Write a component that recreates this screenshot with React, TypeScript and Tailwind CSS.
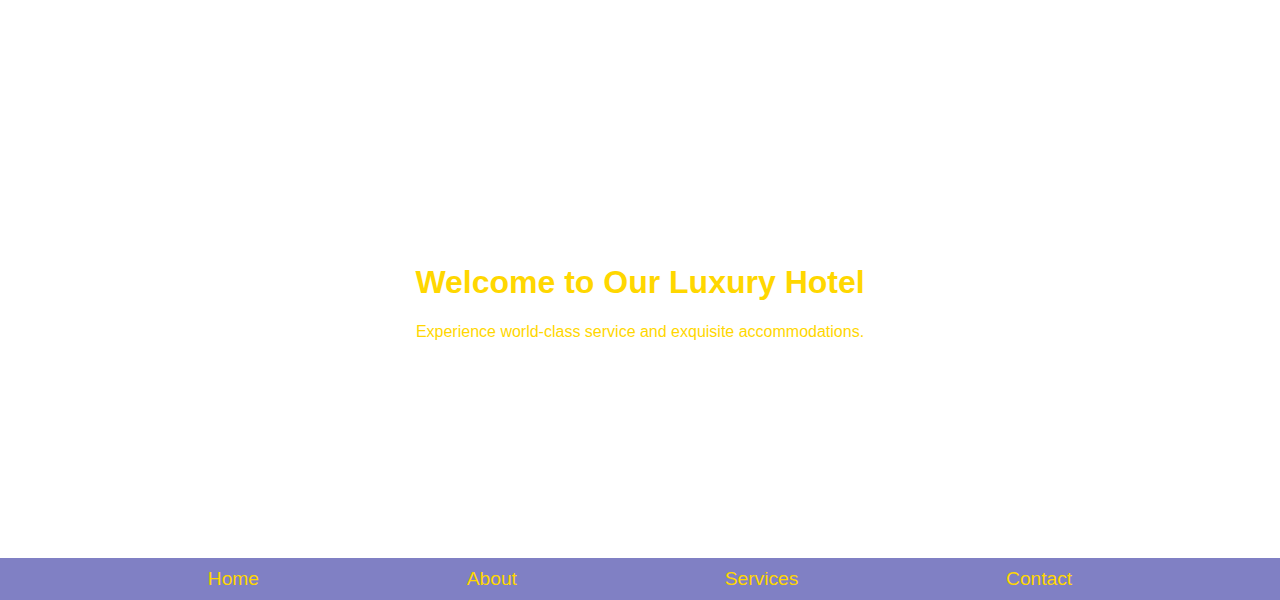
const links = ["Home", "About", "Services", "Contact"];

export default function App() {
    return (
        <div className="min-h-screen bg-white font-['Liberation_Sans',Arial,sans-serif]">
            <section className="flex h-screen items-center justify-center text-center">
                <div>
                    <h1 className="mt-[21.44px] mb-[21.44px] text-[32px] font-bold leading-[1.15] text-[#FFD700]">
                        Welcome to Our Luxury Hotel
                    </h1>
                    <p className="mb-4 text-base leading-[1.15] text-[#FFD700]">
                        Experience world-class service and exquisite accommodations.
                    </p>
                </div>
            </section>
            <nav className="fixed bottom-0 left-0 flex w-full justify-evenly bg-[#8080C4] py-[10px]">
                {links.map((l) => (
                    <a key={l} href="#" className="text-[19.2px] leading-[1.15] text-[#FFD700]">
                        {l}
                    </a>
                ))}
            </nav>
        </div>
    );
}
